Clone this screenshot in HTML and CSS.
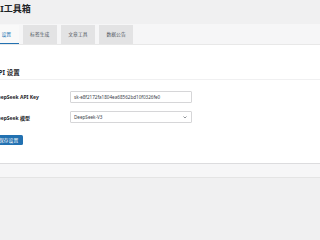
FILE: index.html
```html
<!DOCTYPE html>
<html lang="zh-CN">
<head>
<meta charset="utf-8">
<title>AI工具箱</title>
<link rel="stylesheet" href="styles.css">
</head>
<body>
<div class="wrap">
  <h1 class="title">AI工具箱</h1>
  <div class="shell">
    <nav class="tabs">
      <a class="tab active">设置</a>
      <a class="tab">标签生成</a>
      <a class="tab">文章工具</a>
      <a class="tab">数据公告</a>
    </nav>
    <div class="panel">
      <h2 class="section">API 设置</h2>
      <div class="row">
        <label class="label">DeepSeek API Key</label>
        <div class="field">sk-e8f2172fa1804ea68562bd10f0326fe0</div>
      </div>
      <div class="row">
        <label class="label">DeepSeek 模型</label>
        <div class="field select">
          <span>DeepSeek-V3</span>
          <svg class="chev" viewBox="0 0 8 5" width="4" height="2.5"><path d="M1 1l3 3 3-3" fill="none" stroke="#50575e" stroke-width="1.3"/></svg>
        </div>
      </div>
      <button class="btn">保存设置</button>
    </div>
  </div>
</div>
</body>
</html>
```
FILE: styles.css
```css
html, body {
  margin: 0;
  padding: 0;
  background: #f0f0f1;
  overflow: hidden;
}
body {
  width: 320px;
  height: 200px;
  font-family: "Noto Sans", "Noto Sans CJK SC", sans-serif;
  color: #1d2327;
}
.wrap {
  margin-left: -6px;
  width: 340px;
}
.title {
  margin: 0;
  box-sizing: border-box;
  height: 24px;
  padding-top: 3px;
  font-size: 9px;
  line-height: 12px;
  font-weight: 700;
  color: #1d2327;
}
.shell {
  background: #f6f6f7;
  border-bottom: 1px solid #e4e4e4;
  padding-bottom: 13px;
}
.tabs {
  display: flex;
  gap: 4px;
  height: 21px;
  box-sizing: border-box;
  padding-top: 0.5px;
  border-bottom: 1px solid #e8e8e8;
}
.tab {
  display: block;
  padding: 0 7.5px;
  background: #e3e3e4;
  font-size: 4.8px;
  line-height: 19px;
  color: #50575e;
}
.tab.active {
  background: #f9f9f9;
  color: #2271b1;
  box-sizing: border-box;
  border-bottom: 1.5px solid #2271b1;
}
.panel {
  background: #fff;
  border-bottom: 1px solid #dcdcde;
  padding: 22.5px 0 18px 0;
}
.section {
  margin: 0 0 11px 0;
  padding-bottom: 2.5px;
  border-bottom: 1px solid #f0f0f1;
  font-size: 6.5px;
  line-height: 9px;
  font-weight: 700;
  color: #1d2327;
}
.row {
  display: grid;
  grid-template-columns: 76px 122px;
  align-items: center;
  margin-bottom: 8px;
}
.label {
  font-size: 5px;
  font-weight: 700;
  color: #1d2327;
}
.field {
  box-sizing: border-box;
  height: 12px;
  border: 1px solid #d6d6d8;
  border-radius: 1px;
  padding: 0 4px 0 3px;
  display: flex;
  align-items: center;
  font-size: 4.6px;
  color: #3c434a;
  background: #fff;
}
.select span {
  flex: 1;
}
.chev {
  display: block;
}
.btn {
  display: block;
  margin-top: 12px;
  height: 10px;
  padding: 0 5px;
  border: 0;
  border-radius: 1.5px;
  background: #2271b1;
  color: #fff;
  font-family: inherit;
  font-size: 4.8px;
  line-height: 10px;
}
```
